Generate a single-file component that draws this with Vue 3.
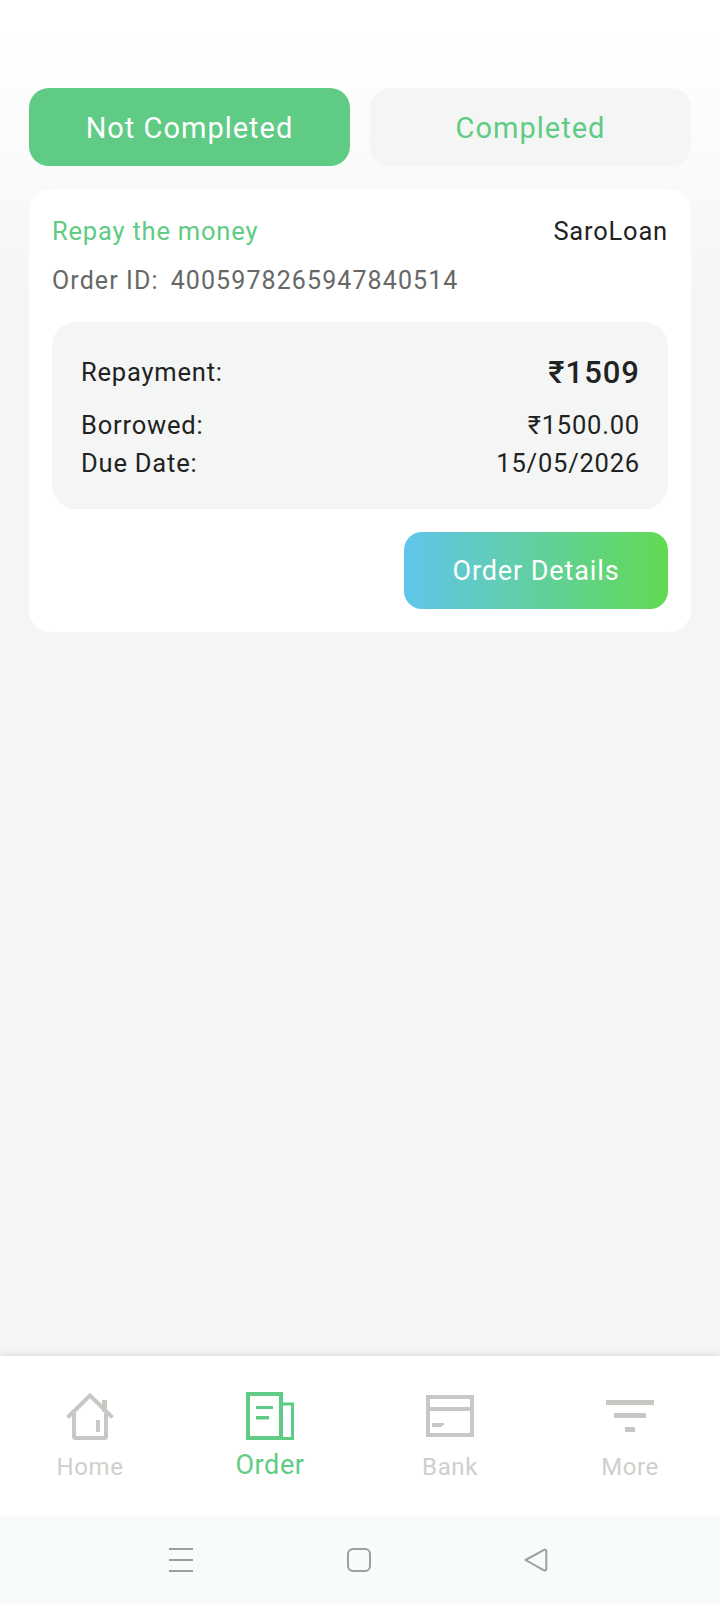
<script setup>
const navItems = [
  { key: 'home', label: 'Home' },
  { key: 'order', label: 'Order', active: true },
  { key: 'bank', label: 'Bank' },
  { key: 'more', label: 'More' }
]
</script>

<template>
  <div class="page">
    <main class="content">
      <div class="tabs">
        <button type="button" class="tab tab-active">Not Completed</button>
        <button type="button" class="tab">Completed</button>
      </div>

      <section class="card">
        <div class="card-top">
          <span class="status">Repay the money</span>
          <span class="brand">SaroLoan</span>
        </div>
        <div class="order-id"><span class="order-label">Order ID:</span>4005978265947840514</div>

        <div class="summary">
          <div class="row row-main">
            <span>Repayment:</span>
            <strong>₹1509</strong>
          </div>
          <div class="row row-first">
            <span>Borrowed:</span>
            <span>₹1500.00</span>
          </div>
          <div class="row">
            <span>Due Date:</span>
            <span>15/05/2026</span>
          </div>
        </div>

        <div class="card-actions">
          <button type="button" class="details-btn">Order Details</button>
        </div>
      </section>
    </main>

    <nav class="tabbar">
      <div
        v-for="item in navItems"
        :key="item.key"
        class="nav-item"
        :class="{ active: item.active }"
      >
        <svg v-if="item.key === 'home'" class="nav-icon" viewBox="0 0 48 48">
          <path d="M1.500 25.500 24 3.500 46.500 25.500" fill="none" stroke="#c8c7c3" stroke-width="4" />
          <path d="M8 21V44.500a1.500 1.500 0 0 0 1.500 1.500H38.500a1.500 1.500 0 0 0 1.500-1.500V21" fill="none" stroke="#c8c7c3" stroke-width="4" />
          <path d="M36 8h5v12h-5zM30 28h4v12h-4z" fill="#c8c7c3" />
        </svg>
        <svg v-else-if="item.key === 'order'" class="nav-icon" viewBox="0 0 48 48">
          <path d="M2 2H35V46H2z" fill="none" stroke="#5fcb84" stroke-width="4" />
          <path d="M37 12H46.500V46.500H37" fill="none" stroke="#5fcb84" stroke-width="3" />
          <path d="M10 14h17v3H10zM10 24h13v3.500H10z" fill="#5fcb84" />
        </svg>
        <svg v-else-if="item.key === 'bank'" class="nav-icon" viewBox="0 0 48 48">
          <path d="M2 5H46V43H2zM2 17H46" fill="none" stroke="#c8c7c3" stroke-width="4" />
          <path d="M6 31h12v2.500h-2V35H6z" fill="#c8c7c3" />
        </svg>
        <svg v-else class="nav-icon" viewBox="0 0 48 48">
          <path d="M0 8h48v5H0zM8 21h32v5H8zM19 35h10v5H19z" fill="#c8c7c3" />
        </svg>
        <span class="nav-label">{{ item.label }}</span>
      </div>
    </nav>

    <div class="system-bar">
      <svg class="sys-icon" viewBox="0 0 24 24">
        <path d="M0 1h24M0 12h24M0 23h24" fill="none" stroke="#9c9f9d" stroke-width="2" />
      </svg>
      <svg class="sys-icon" viewBox="0 0 24 24">
        <rect x="1" y="1" width="22" height="22" rx="5" fill="none" stroke="#9c9f9d" stroke-width="2" />
      </svg>
      <svg class="sys-icon sys-back" viewBox="0 0 24 24">
        <path d="M1.500 12 20 1.800a1.500 1.500 0 0 1 2.300 1.300V21a1.500 1.500 0 0 1-2.300 1.300z" fill="none" stroke="#9c9f9d" stroke-width="2" stroke-linejoin="round" />
      </svg>
    </div>
  </div>
</template>

<style scoped>
.page {
  display: flex;
  flex-direction: column;
  height: 1604px;
  background: #f4f6f5;
  font-family: Roboto, "Noto Sans", sans-serif;
  color: #1f2321;
}
.content {
  flex: 1;
  padding: 88px 29px 0;
  background: linear-gradient(#ffffff 30px, #f4f6f5 300px);
}
.tabs {
  display: grid;
  grid-template-columns: 321px 321px;
  gap: 20px;
}
.tab {
  height: 78px;
  padding: 2px 0 0;
  border: none;
  border-radius: 20px;
  background: #f4f6f5;
  color: #5fcb84;
  font: inherit;
  font-size: 29px;
  letter-spacing: 1px;
}
.tab-active {
  background: #5fcb84;
  color: #fff;
}
.card {
  margin-top: 23px;
  padding: 23px;
  border-radius: 22px;
  background: #fff;
}
.card-top {
  display: flex;
  justify-content: space-between;
  align-items: center;
  height: 38px;
  font-size: 25.500px;
  letter-spacing: 0.8px;
}
.status {
  color: #5fcb84;
}
.order-id {
  margin-top: 13px;
  height: 36px;
  line-height: 36px;
  font-size: 25px;
  letter-spacing: 1.100px;
  color: #666866;
}
.order-label {
  margin-right: 12px;
}
.summary {
  margin-top: 23px;
  padding: 31px 28px 27px 29px;
  border-radius: 24px;
  background: #f4f6f5;
  font-size: 25.500px;
  letter-spacing: 0.8px;
}
.row {
  display: flex;
  justify-content: space-between;
  align-items: center;
  height: 38px;
}
.row-main strong {
  font-size: 31px;
  font-weight: 500;
  letter-spacing: 1px;
}
.row-first {
  margin-top: 15px;
}
.card-actions {
  display: flex;
  justify-content: flex-end;
  margin-top: 23px;
}
.details-btn {
  width: 264px;
  height: 77px;
  border: none;
  border-radius: 18px;
  background: linear-gradient(90deg, #60c5ec, #62da52);
  color: #fff;
  font: inherit;
  font-size: 27px;
  letter-spacing: 0.9px;
}
.tabbar {
  display: grid;
  grid-template-columns: repeat(4, 1fr);
  height: 160px;
  background: #fff;
  box-shadow: 0 -1px 8px rgba(0, 0, 0, 0.12);
  position: relative;
}
.nav-item {
  display: flex;
  flex-direction: column;
  align-items: center;
  padding-top: 36px;
  color: #cfcfcc;
}
.nav-item.active {
  color: #5fcb84;
}
.nav-icon {
  width: 48px;
  height: 48px;
  display: block;
}
.nav-label {
  margin-top: 11px;
  font-size: 24px;
  line-height: 32px;
  letter-spacing: 0.6px;
}
.active .nav-label {
  margin-top: 9px;
  font-size: 27px;
}
.system-bar {
  position: relative;
  display: grid;
  grid-template-columns: 24px 24px 24px;
  justify-content: center;
  column-gap: 154px;
  height: 88px;
  padding: 32px 2px 0 0;
  box-sizing: border-box;
  background: #f8fcf9;
}
.sys-icon {
  width: 24px;
  height: 24px;
  display: block;
}
.sys-back {
  margin-left: -1px;
}
</style>

<style>
body {
  margin: 0;
}
</style>
